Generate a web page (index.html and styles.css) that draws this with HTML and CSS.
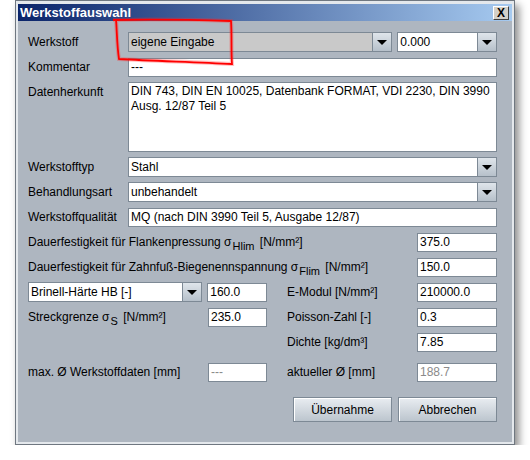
FILE: index.html
```html
<!DOCTYPE html>
<html lang="de">
  <head>
    <meta charset="UTF-8" />
    <title>Werkstoffauswahl</title>
    <link rel="stylesheet" href="styles.css">
  </head>
  <body>
    <div class="window">
      <div class="titlebar">
        <span class="title">Werkstoffauswahl</span>
        <span class="close-btn">X</span>
      </div>

      <div class="content">
        <div class="row">
          <span class="label">Werkstoff</span>
          <div class="combo combo-readonly material">
            <span class="combo-text">eigene Eingabe</span>
            <span class="arrow"></span>
          </div>
          <div class="combo variant">
            <span class="combo-text">0.000</span>
            <span class="arrow"></span>
          </div>
        </div>

        <div class="row">
          <span class="label">Kommentar</span>
          <div class="field grow">---</div>
        </div>

        <div class="row row-tall">
          <span class="label">Datenherkunft</span>
          <div class="field grow textarea">DIN 743, DIN EN 10025, Datenbank FORMAT, VDI 2230, DIN 3990<br>Ausg. 12/87 Teil 5</div>
        </div>

        <div class="row">
          <span class="label">Werkstofftyp</span>
          <div class="combo grow">
            <span class="combo-text">Stahl</span>
            <span class="arrow"></span>
          </div>
        </div>

        <div class="row">
          <span class="label">Behandlungsart</span>
          <div class="combo grow">
            <span class="combo-text">unbehandelt</span>
            <span class="arrow"></span>
          </div>
        </div>

        <div class="row">
          <span class="label">Werkstoffqualität</span>
          <div class="field grow">MQ (nach DIN 3990 Teil 5, Ausgabe 12/87)</div>
        </div>

        <div class="row">
          <span class="label grow">Dauerfestigkeit für Flankenpressung &sigma;<sub>Hlim</sub> [N/mm²]</span>
          <div class="field value">375.0</div>
        </div>

        <div class="row">
          <span class="label grow">Dauerfestigkeit für Zahnfuß-Biegenennspannung &sigma;<sub>Flim</sub> [N/mm²]</span>
          <div class="field value">150.0</div>
        </div>

        <div class="row props">
          <div class="combo hardness">
            <span class="combo-text">Brinell-Härte HB [-]</span>
            <span class="arrow"></span>
          </div>
          <div class="field short">160.0</div>
          <span class="label right-label">E-Modul [N/mm²]</span>
          <div class="field value">210000.0</div>
        </div>

        <div class="row props">
          <span class="label left-label">Streckgrenze &sigma;<sub>S</sub> [N/mm²]</span>
          <div class="field short">235.0</div>
          <span class="label right-label">Poisson-Zahl [-]</span>
          <div class="field value">0.3</div>
        </div>

        <div class="row props">
          <span class="label left-label"></span>
          <span class="spacer"></span>
          <span class="label right-label">Dichte [kg/dm³]</span>
          <div class="field value">7.85</div>
        </div>

        <div class="row props diameter">
          <span class="label left-label">max. Ø Werkstoffdaten [mm]</span>
          <div class="field short disabled">---</div>
          <span class="label right-label">aktueller Ø [mm]</span>
          <div class="field value disabled">188.7</div>
        </div>

        <div class="buttons">
          <button type="button">Übernahme</button>
          <button type="button">Abbrechen</button>
        </div>
      </div>
    </div>

    <!-- hand drawn highlight over the material combo -->
    <svg class="marker" width="530" height="460" viewBox="0 0 530 460">
      <path d="M113 20 C150 19 200 20 231 21 C232 35 231 50 232 64 C195 62 155 61 119 59 C117 46 117 33 116 19"
            fill="none" stroke="#ff3030" stroke-width="4" opacity="0.3" />
      <path d="M113 20 C150 19 200 20 231 21 C232 35 231 50 232 64 C195 62 155 61 119 59 C117 46 117 33 116 19"
            fill="none" stroke="#f00" stroke-width="1.8" />
    </svg>
  </body>
</html>
```

FILE: styles.css
```css
body {
  margin: 0;
  background: #ffffff;
  font-family: 'Liberation Sans', Arial, sans-serif;
  font-size: 12px;
  color: #000000;
}

.window {
  width: 500px;
  height: 445px;
  box-sizing: border-box;
  margin-left: 15px;
  border: 1px solid #6f7780;
  background: #e4e8ec;
  padding: 3px 2px 2px 2px;
  box-shadow: 4px 5px 8px rgba(0, 0, 0, 0.45);
  display: flex;
  flex-direction: column;
}

.titlebar {
  height: 17px;
  background: linear-gradient(to right, #0a246a, #a6caf0);
  display: flex;
  align-items: center;
  justify-content: space-between;
  padding: 0 3px 0 2px;
}

.title {
  color: #ffffff;
  font-weight: bold;
  font-size: 13px;
}

.close-btn {
  width: 16px;
  height: 14px;
  box-sizing: border-box;
  background: #d4d0c8;
  border: 1px solid;
  border-color: #ffffff #404040 #404040 #ffffff;
  font-size: 12px;
  font-weight: bold;
  line-height: 12px;
  text-align: center;
}

.content {
  flex: 1;
  background: #aeb6c0;
  padding: 11px 15px 0 10px;
}

.row {
  display: flex;
  align-items: center;
  height: 20px;
  margin-bottom: 5px;
}

.row-tall {
  height: 70px;
  align-items: flex-start;
}

.row-tall .label {
  margin-top: 3px;
}

.label {
  width: 100px;
  flex-shrink: 0;
  white-space: nowrap;
}

.label sub {
  font-size: 11px;
  vertical-align: -4px;
  line-height: 0;
  margin-left: 1px;
  margin-right: 2px;
}

.grow {
  flex: 1;
  width: auto;
}

.field {
  height: 19px;
  box-sizing: border-box;
  background: #ffffff;
  border: 1px solid #7d8995;
  padding: 0 2px;
  line-height: 17px;
  white-space: nowrap;
}

.textarea {
  height: 70px;
  line-height: 15px;
  padding-top: 1px;
  white-space: normal;
}

.field.disabled {
  color: #8a8a8a;
}

.combo {
  height: 20px;
  box-sizing: border-box;
  background: #ffffff;
  border: 1px solid #7d8995;
  display: flex;
}

.combo-readonly {
  background: #c9c9c9;
}

.combo-text {
  flex: 1;
  padding: 0 2px;
  line-height: 18px;
  white-space: nowrap;
}

.arrow {
  width: 18px;
  border-left: 1px solid #7d8995;
  background: linear-gradient(#dfe5eb, #b6c0ca);
  position: relative;
}

.arrow::after {
  content: "";
  position: absolute;
  left: 4px;
  top: 7px;
  border-left: 5px solid transparent;
  border-right: 5px solid transparent;
  border-top: 5px solid #000000;
}

.material {
  width: 265px;
}

.variant {
  width: 100px;
  margin-left: 5px;
}

.value {
  width: 80px;
  flex-shrink: 0;
}

.hardness {
  width: 175px;
}

.left-label {
  width: 175px;
}

.short {
  width: 60px;
  margin-left: 5px;
}

.spacer {
  width: 60px;
  margin-left: 5px;
}

.right-label {
  width: 130px;
  margin-left: 20px;
}

.diameter {
  margin-top: 10px;
}

.buttons {
  display: flex;
  justify-content: flex-end;
  gap: 6px;
  margin-top: 15px;
}

.buttons button {
  width: 99px;
  height: 25px;
  font-family: 'Liberation Sans', Arial, sans-serif;
  font-size: 12px;
  color: #000000;
  border: 1px solid #7d8995;
  box-shadow: inset 1px 1px 0 #ffffff;
  background: linear-gradient(#e9edf1, #bcc5ce);
  padding: 0;
}

.marker {
  position: absolute;
  left: 0;
  top: 0;
  pointer-events: none;
}
```
